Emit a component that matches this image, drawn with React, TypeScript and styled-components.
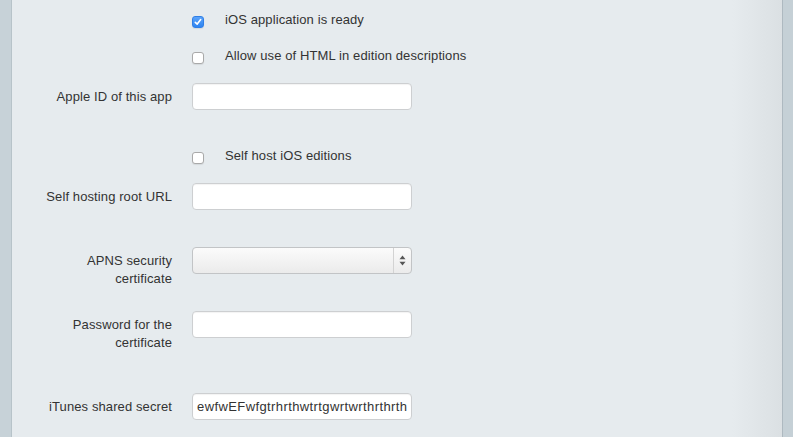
import React from 'react';
import styled, { createGlobalStyle } from 'styled-components';

const GlobalStyle = createGlobalStyle`
  html, body {
    margin: 0;
    padding: 0;
    height: 100%;
  }
  body {
    font-family: "Liberation Sans", Arial, sans-serif;
    font-size: 13px;
    letter-spacing: 0.1px;
    color: #333;
    background: #c7d2d8;
  }
`;

type CheckOption = { label: string; checked?: boolean; top: number };

const CheckMark = () => (
  <svg width="8" height="8" viewBox="0 0 8 8">
    <path d="M1.3 4.3 L3.2 6.1 L6.7 1.6" fill="none" stroke="#fff" strokeWidth="1.6" strokeLinecap="round" strokeLinejoin="round" />
  </svg>
);

const SelectArrows = () => (
  <svg width="7" height="11" viewBox="0 0 7 11">
    <path d="M3.5 0.5 L6.5 4.2 L0.5 4.2 Z" fill="#555" />
    <path d="M3.5 10.5 L6.5 6.8 L0.5 6.8 Z" fill="#555" />
  </svg>
);

const CheckRow = ({ label, checked, top }: CheckOption) => (
  <Row $top={top}>
    <span />
    <CheckLine>
      <CheckCell>
        <Box $checked={!!checked}>{checked && <CheckMark />}</Box>
      </CheckCell>
      <CheckText>{label}</CheckText>
    </CheckLine>
  </Row>
);

const FieldRow = ({ label, top, children }: { label: React.ReactNode; top: number; children: React.ReactNode }) => (
  <Row $top={top}>
    <Label>{label}</Label>
    <div>{children}</div>
  </Row>
);

const App = () => {
  return (
    <>
      <GlobalStyle />
      <Page>
        <LeftStrip />
        <Panel>
          <Form>
            <CheckRow label="iOS application is ready" checked top={11} />
            <CheckRow label="Allow use of HTML in edition descriptions" top={18} />
            <FieldRow label="Apple ID of this app" top={18}>
              <TextInput />
            </FieldRow>
            <CheckRow label="Self host iOS editions" top={37} />
            <FieldRow label="Self hosting root URL" top={18}>
              <TextInput />
            </FieldRow>
            <FieldRow label={<>APNS security<br />certificate</>} top={37}>
              <Select>
                <SelectBody />
                <SelectArrow>
                  <SelectArrows />
                </SelectArrow>
              </Select>
            </FieldRow>
            <FieldRow label={<>Password for the<br />certificate</>} top={23}>
              <TextInput />
            </FieldRow>
            <FieldRow label="iTunes shared secret" top={41}>
              <TextInput>ewfwEFwfgtrhrthwtrtgwrtwrthrthrth</TextInput>
            </FieldRow>
          </Form>
        </Panel>
        <RightStrip />
      </Page>
    </>
  );
};

export default App;

const Page = styled.div`
  display: flex;
  flex-direction: row;
  height: 437px;
  overflow: hidden;
`;

const LeftStrip = styled.div`
  flex: 0 0 11px;
  background: #c7d2d8;
  border-right: 1px solid #b7c3c9;
`;

const RightStrip = styled.div`
  flex: 0 0 10px;
  background: #c5d0d6;
  border-left: 1px solid #aeb9c0;
`;

const Panel = styled.div`
  flex: 1;
  background: linear-gradient(to right, #e6ebee calc(100% - 50px), #dbe0e3 100%);
`;

const Form = styled.div`
  display: flex;
  flex-direction: column;
`;

const Row = styled.div<{ $top: number }>`
  display: grid;
  grid-template-columns: 160px 1fr;
  column-gap: 20px;
  align-items: start;
  margin-top: ${(p) => p.$top}px;
`;

const Label = styled.div`
  padding-top: 5px;
  line-height: 18px;
  text-align: right;
  color: #333;
`;

const CheckLine = styled.div`
  display: flex;
  align-items: flex-start;
  line-height: 18px;
`;

const CheckCell = styled.div`
  flex: 0 0 33px;
  padding-top: 5px;
`;

const Box = styled.span<{ $checked: boolean }>`
  display: flex;
  align-items: center;
  justify-content: center;
  box-sizing: border-box;
  width: 12px;
  height: 12px;
  border-radius: 3px;
  border: 1px solid ${(p) => (p.$checked ? '#2f7fe6' : '#a9a9a9')};
  background: ${(p) => (p.$checked ? 'linear-gradient(#5aa3fb, #2f84f0)' : '#fff')};
  box-shadow: 0 1px 1px rgba(0, 0, 0, 0.08);
`;

const CheckText = styled.span`
  color: #333;
`;

const TextInput = styled.div`
  box-sizing: border-box;
  width: 220px;
  height: 27px;
  padding: 0 4px;
  line-height: 25px;
  letter-spacing: 0.4px;
  background: #fff;
  border: 1px solid #cdcfd1;
  border-radius: 4px;
  box-shadow: inset 0 1px 1px rgba(0, 0, 0, 0.05);
  color: #333;
  white-space: nowrap;
  overflow: hidden;
`;

const Select = styled.div`
  box-sizing: border-box;
  display: flex;
  width: 220px;
  height: 27px;
  border: 1px solid #c2c4c6;
  border-radius: 4px;
  background: linear-gradient(#fbfbfb, #ebebeb);
  overflow: hidden;
`;

const SelectBody = styled.div`
  flex: 1;
`;

const SelectArrow = styled.div`
  flex: 0 0 17px;
  display: flex;
  align-items: center;
  justify-content: center;
  border-left: 1px solid #d3d3d3;
`;
